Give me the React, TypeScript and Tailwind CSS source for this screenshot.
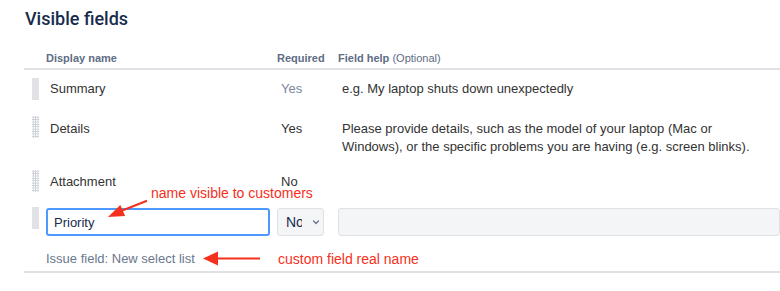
import React from 'react';

const RED = '#f5301c';

const Handle = ({ solid, className = '' }: { solid?: boolean; className?: string }) => (
  <div
    className={
      (solid
        ? 'w-[7px] h-[22px] bg-[#eeeff1] bg-[radial-gradient(#e0e2e6_0.8px,transparent_0.8px)] bg-[length:2px_2px] '
        : 'w-[7px] h-[22px] bg-[radial-gradient(#c8ccd3_1px,transparent_1px)] bg-[length:2.4px_2.4px] ') + className
    }
  />
);

type Row = {
  name: string;
  required: string;
  muted?: boolean;
  help: string[];
  solid?: boolean;
  pad: string;
  handleOffset: string;
};

const rows: Row[] = [
  {
    name: 'Summary',
    required: 'Yes',
    muted: true,
    help: ['e.g. My laptop shuts down unexpectedly'],
    solid: true,
    pad: 'pt-[10px] pb-[10px]',
    handleOffset: '-mt-[2px]',
  },
  {
    name: 'Details',
    required: 'Yes',
    help: [
      'Please provide details, such as the model of your laptop (Mac or',
      'Windows), or the specific problems you are having (e.g. screen blinks).',
    ],
    pad: 'pt-[10px] pb-[10px]',
    handleOffset: '-mt-[4px]',
  },
  { name: 'Attachment', required: 'No', help: [], pad: 'pt-[7px] pb-[10px]', handleOffset: '-mt-[3px]' },
];

const App = () => {
  return (
    <div className="relative w-[780px] h-[291px] overflow-hidden bg-white font-['Liberation_Sans',sans-serif] text-[13px] text-[#333]">
      <h2 className="pl-[25px] pt-[7px] font-['Roboto',sans-serif] text-[18px] font-medium leading-[24px] text-[#172b4d]">
        Visible fields
      </h2>

      <div className="ml-[24px] mt-[17px]">
        {/* header */}
        <div className="flex items-center h-[22px] border-b-2 border-[#dfe1e6] text-[11px] font-bold text-[#5e6c84]">
          <div className="w-[22px]" />
          <div className="w-[231px]">Display name</div>
          <div className="w-[61px]">Required</div>
          <div>
            Field help <span className="font-normal">(Optional)</span>
          </div>
        </div>

        {rows.map((r) => (
          <div key={r.name} className={'flex items-start leading-[18px] ' + r.pad}>
            <div className="w-[26px] pl-[8px]">
              <Handle solid={r.solid} className={r.handleOffset} />
            </div>
            <div className="w-[231px]">{r.name}</div>
            <div className={r.muted ? 'w-[61px] text-[#7a869a]' : 'w-[61px]'}>{r.required}</div>
            <div>
              {r.help.map((l) => (
                <div key={l}>{l}</div>
              ))}
            </div>
          </div>
        ))}

        {/* editing row */}
        <div className="flex items-start mt-[6px]">
          <div className="w-[22px] pl-[8px]">
            <Handle solid className="-mt-[1px]" />
          </div>
          <input
            readOnly
            value="Priority"
            className="w-[224px] h-[28px] rounded-[3px] border-2 border-[#4c9aff] px-[6px] text-[13px] text-[#172b4d] outline-none"
          />
          <div className="ml-[7px] w-[47px] h-[28px] flex items-center rounded-[3px] border border-[#dfe1e6] bg-[#f4f5f7] pl-[8px] text-[14px] text-[#172b4d]">
            <span className="w-[16px] overflow-hidden whitespace-nowrap">No</span>
            <svg width="10" height="10" viewBox="0 0 10 10" className="ml-[9px]">
              <path d="M2.5 4 L5 6.5 L7.5 4" fill="none" stroke="#6b778c" strokeWidth="1.3" strokeLinecap="round" strokeLinejoin="round" />
            </svg>
          </div>
          <div className="ml-[14px] flex-1 h-[28px] rounded-[3px] border border-[#dfe1e6] bg-[#f4f5f7]" />
        </div>
        <div className="pl-[22px] pt-[14px] pb-[3px] text-[#6b778c] leading-[18px]">Issue field: New select list</div>
        <div className="border-b-2 border-[#dfe1e6]" />
      </div>

      {/* annotations */}
      <div className="absolute left-[151px] top-[184px] text-[14px] leading-[18px]" style={{ color: RED }}>
        name visible to customers
      </div>
      <div className="absolute left-[278px] top-[250px] text-[14px] leading-[18px]" style={{ color: RED }}>
        custom field real name
      </div>
      <svg className="absolute left-0 top-0 pointer-events-none" width="780" height="291">
        <line x1="147" y1="200.7" x2="121" y2="211" stroke={RED} strokeWidth="2" />
        <polygon points="108,217 120.3,205.1 125.1,216.1" fill={RED} />
        <line x1="260" y1="258.5" x2="216" y2="258.5" stroke={RED} strokeWidth="2" />
        <polygon points="203,258.5 218,251.5 218,265.5" fill={RED} />
      </svg>
    </div>
  );
};

export default App;
